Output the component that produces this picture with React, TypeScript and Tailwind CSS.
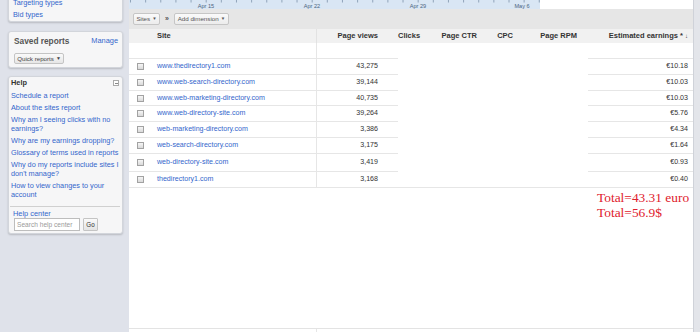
const rows = [
  { site: 'www.thedirectory1.com', views: '43,275', earn: '€10.18', h: 'h-[16px]' },
  { site: 'www.web-search-directory.com', views: '39,144', earn: '€10.03', h: 'h-[16px]' },
  { site: 'www.web-marketing-directory.com', views: '40,735', earn: '€10.03', h: 'h-[15px]' },
  { site: 'www.web-directory-site.com', views: '39,264', earn: '€5.76', h: 'h-[16px]' },
  { site: 'web-marketing-directory.com', views: '3,386', earn: '€4.34', h: 'h-[16px]' },
  { site: 'web-search-directory.com', views: '3,175', earn: '€1.64', h: 'h-[16px]' },
  { site: 'web-directory-site.com', views: '3,419', earn: '€0.93', h: 'h-[18px]' },
  { site: 'thedirectory1.com', views: '3,168', earn: '€0.40', h: 'h-[16px]' },
];

const helpLinks = [
  ['Schedule a report'],
  ['About the sites report'],
  ['Why am I seeing clicks with no', 'earnings?'],
  ['Why are my earnings dropping?'],
  ['Glossary of terms used in reports'],
  ['Why do my reports include sites I', "don't manage?"],
  ['How to view changes to your', 'account'],
];

function Card({ className, children }: { className: string; children: React.ReactNode }) {
  return (
    <div
      className={`rounded-[3px] border border-[#d2d5db] bg-[#f6f6f7] shadow-[0_1px_2px_rgba(0,0,0,0.18)] ${className}`}
    >
      {children}
    </div>
  );
}

function ChartStrip() {
  const ticks = Array.from({ length: 28 }, (_, i) => 1.5 + i * 15.14);
  const labels = [
    { x: 77, t: 'Apr 15' },
    { x: 183, t: 'Apr 22' },
    { x: 289, t: 'Apr 29' },
    { x: 393, t: 'May 6' },
  ];
  return (
    <div className="flex h-[9px] shrink-0">
      <svg width="411" height="9" className="block">
        <rect width="411" height="9" fill="#d9e6f4" />
        {ticks.map((x) => (
          <line key={x} x1={x} x2={x} y1="0" y2="2.5" stroke="#7d93ab" strokeWidth="0.8" />
        ))}
        {labels.map((l) => (
          <text
            key={l.t}
            x={l.x}
            y="7.5"
            textAnchor="middle"
            fontSize="5.6"
            fill="#4b6580"
            fontFamily="Liberation Sans, Arial, sans-serif"
          >
            {l.t}
          </text>
        ))}
      </svg>
      <div className="flex-1 bg-white" />
    </div>
  );
}

function Checkbox() {
  return <div className="h-[7px] w-[7px] border border-[#a2a2a2] bg-gradient-to-b from-[#f6f6f6] to-[#d9d9d9]" />;
}

export default function App() {
  return (
    <div className="flex h-[332px] w-[700px] overflow-hidden bg-[#dfe2ea] font-['Liberation_Sans',Arial,sans-serif]">
      {/* sidebar */}
      <aside className="w-[129px] shrink-0 pl-[8px] pr-[6px]">
        <Card className="-mt-[10px] pl-[4px] pt-[6px] text-[7.3px] leading-[12px] text-[#3366cc]">
          <div>Targeting types</div>
          <div>Bid types</div>
        </Card>

        <Card className="mt-[9px] px-[4px] pl-[5px] pt-[3px] pb-[3px]">
          <div className="flex items-center justify-between leading-[12px]">
            <span className="text-[8.3px] font-bold text-[#555]">Saved reports</span>
            <span className="text-[7.4px] text-[#3366cc]">Manage</span>
          </div>
          <div className="mt-[6px] flex h-[11px] w-[50px] items-center justify-center rounded-[2px] border border-[#c4c4c4] bg-gradient-to-b from-[#fafafa] to-[#e6e6e6] text-[6.2px] text-[#444]">
            Quick reports <span className="ml-[2px] text-[5px]">▼</span>
          </div>
        </Card>

        <Card className="mt-[8px] pl-[2px] pr-[2px] pb-[2px]">
          <div className="flex items-center justify-between leading-[12px]">
            <span className="text-[7.4px] font-bold text-[#333]">Help</span>
            <span className="mr-[1px] flex h-[6px] w-[6px] items-center justify-center border border-[#aaa] bg-white">
              <span className="h-px w-[3px] bg-[#888]" />
            </span>
          </div>
          <div className="mt-[2px] flex flex-col gap-[3px] text-[7.3px] leading-[9px] text-[#3366cc]">
            {helpLinks.map((lines) => (
              <div key={lines[0]} className="whitespace-nowrap">
                {lines.map((l, i) => (
                  <div key={i}>{l}</div>
                ))}
              </div>
            ))}
          </div>
          <div className="mt-[7px] -ml-[1px] border-t border-[#d0d0d0]" />
          <div className="pl-[2px] pt-[2px] text-[7.4px] leading-[9px] text-[#3366cc]">Help center</div>
          <div className="ml-[3px] flex h-[13px] gap-[3px]">
            <div className="flex w-[66px] items-center border border-[#bdbdbd] bg-white pl-[2px] text-[6.6px] text-[#9a9a9a]">
              Search help center
            </div>
            <div className="flex w-[15px] items-center justify-center rounded-[1px] border border-[#c4c4c4] bg-gradient-to-b from-[#fafafa] to-[#e4e4e4] text-[6.3px] text-[#333]">
              Go
            </div>
          </div>
        </Card>
      </aside>

      {/* main report */}
      <main className="flex w-[564px] shrink-0 flex-col bg-white">
        <ChartStrip />

        <div className="flex h-[20px] shrink-0 items-center bg-[#e6e6e6] pl-[4px]">
          <div className="flex h-[12px] w-[27px] items-center justify-center rounded-[2px] border border-[#c6c6c6] bg-gradient-to-b from-[#fafafa] to-[#ececec] text-[6.2px] text-[#555]">
            Sites <span className="ml-[2px] text-[4.5px]">▼</span>
          </div>
          <span className="ml-[5px] text-[7px] font-bold text-[#555]">»</span>
          <div className="ml-[5px] flex h-[12px] w-[55px] items-center justify-center rounded-[2px] border border-[#c6c6c6] bg-gradient-to-b from-[#fafafa] to-[#ececec] text-[6.2px] text-[#555]">
            Add dimension <span className="ml-[2px] text-[4.5px]">▼</span>
          </div>
        </div>

        {/* header */}
        <div className="flex h-[14px] shrink-0 items-center bg-[#f1f1f1] text-[7.5px] font-bold text-[#333]">
          <div className="w-[21px]" />
          <div className="flex h-full w-[167px] items-center border-r border-[#e2e2e2] pl-[7px]">Site</div>
          <div className="w-[81px] pr-[20px] text-right">Page views</div>
          <div className="w-[30px] pr-[10px] text-right">Clicks</div>
          <div className="w-[56px] pr-[7px] text-right">Page CTR</div>
          <div className="w-[40px] pr-[11px] text-right">CPC</div>
          <div className="w-[64px] pr-[11px] text-right">Page RPM</div>
          <div className="w-[105px] whitespace-nowrap pr-[5px] text-right">
            Estimated earnings * <span className="text-[6px]">↓</span>
          </div>
        </div>

        {/* blank totals row */}
        <div className="flex h-[16px] shrink-0">
          <div className="w-[21px] border-b border-[#e6e6e6]" />
          <div className="w-[167px] border-b border-r border-[#e6e6e6]" />
          <div className="w-[81px] border-b border-[#e6e6e6]" />
          <div className="w-[190px]" />
          <div className="w-[105px] border-b border-[#e6e6e6]" />
        </div>

        {rows.map((r, i) => {
          const last = i === rows.length - 1;
          return (
            <div key={r.site} className={`flex shrink-0 text-[7.1px] text-[#333] ${r.h}`}>
              <div className="flex w-[21px] items-center border-b border-[#e6e6e6] pl-[8px]">
                <Checkbox />
              </div>
              <div className="flex w-[167px] items-center border-b border-r border-[#e6e6e6] pl-[7px] text-[#3366cc]">
                {r.site}
              </div>
              <div className="flex w-[81px] items-center justify-end border-b border-[#e6e6e6] pr-[20px]">
                {r.views}
              </div>
              <div className={`w-[190px] ${last ? 'border-b border-[#e6e6e6]' : ''}`} />
              <div className="flex w-[105px] items-center justify-end border-b border-[#e6e6e6] pr-[5px]">
                {r.earn}
              </div>
            </div>
          );
        })}

        <div className="mt-[2px] pl-[468px] font-['Liberation_Serif','Times_New_Roman',serif] text-[13.4px] leading-[15px] whitespace-nowrap text-[#e0202c]">
          <div>Total=43.31 euro</div>
          <div>Total=56.9$</div>
        </div>

        <div className="flex-1" />

        <div className="flex h-[4px] shrink-0 border-t border-[#e3e3e3]">
          <div className="w-[188px] border-r border-[#e6e6e6]" />
        </div>
      </main>

      <div className="flex-1 border-l border-[#cfd2d9] bg-[#e3e5ea]" />
    </div>
  );
}
